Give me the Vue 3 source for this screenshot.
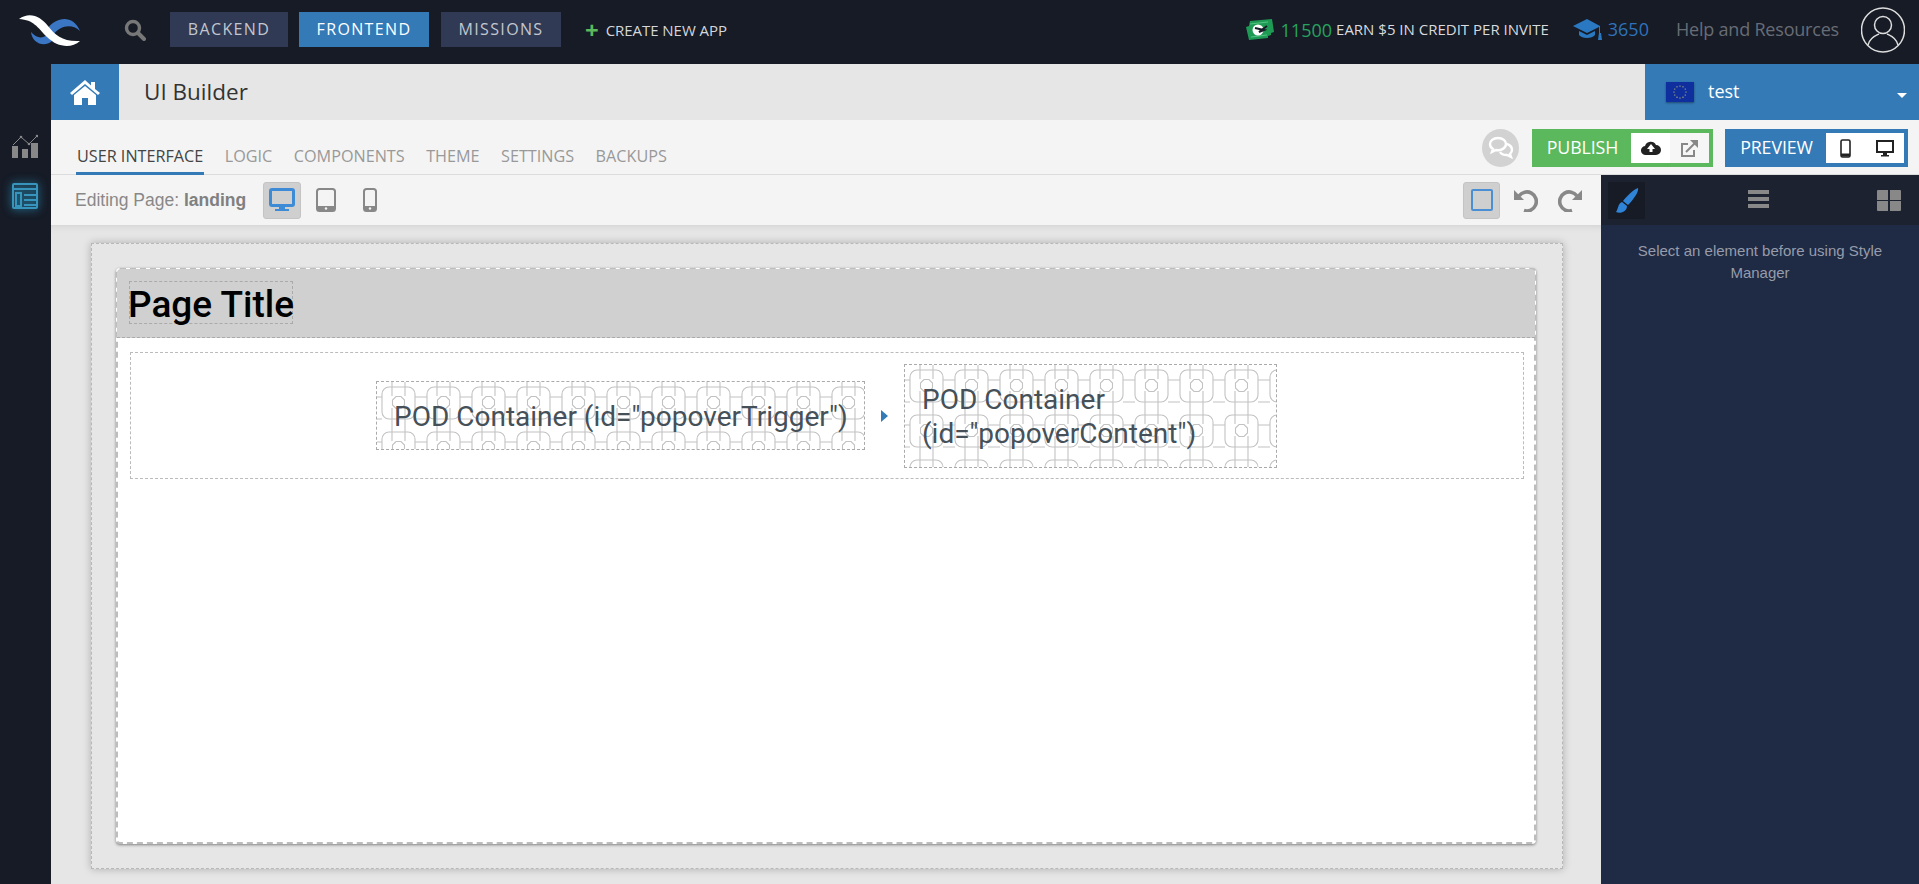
<script setup>
const tabs = ['USER INTERFACE', 'LOGIC', 'COMPONENTS', 'THEME', 'SETTINGS', 'BACKUPS']
const stars = Array.from({ length: 12 }, (_, i) => ({
  x: 14 + 6 * Math.cos((i * Math.PI) / 6),
  y: 10 + 6 * Math.sin((i * Math.PI) / 6),
}))
</script>

<template>
  <div class="app">
    <header class="topbar">
      <svg class="logo" width="80" height="50" viewBox="0 0 80 50">
        <path fill="#3a76c4" d="M70 26C63 9 46 12 38 23l5 7c7-9 18-12 27-4zM21 27c1 11 13 16 21 9l-5-6c-5 4-11 3-16-3z" />
        <path fill="#fff" d="M9 14C20 6 31 12 38 21s15 16 32 15c-9 8-23 6-33-4S24 15 9 14z" />
      </svg>
      <svg class="search" width="22" height="22" viewBox="0 0 22 22">
        <circle cx="9" cy="9" r="6.500" fill="none" stroke="#777" stroke-width="3.400" />
        <path d="M14 14l6 6" stroke="#777" stroke-width="4" stroke-linecap="round" />
      </svg>
      <a class="nav-btn backend">BACKEND</a>
      <a class="nav-btn frontend">FRONTEND</a>
      <a class="nav-btn missions">MISSIONS</a>
      <span class="create"><b class="plus">+</b>CREATE NEW APP</span>
      <div class="top-right">
        <svg width="30" height="24" viewBox="0 0 30 24" class="money">
          <path fill="#1f9a55" d="M5 3l22-2 2 13-3 1 0 2-3 1 0 2L4 22 1 9l3-1z" />
          <path fill="none" stroke="#5fd08e" stroke-width=".8" d="M5 6l18-2M6 19l16-2" />
          <circle cx="13" cy="12" r="5.500" fill="#fff" />
          <path d="M10 10l9 2-5 2 8-6" fill="none" stroke="#161b26" stroke-width="2" />
        </svg>
        <span class="credits">11500</span>
        <span class="earn">EARN $5 IN CREDIT PER INVITE</span>
        <svg class="cap" width="30" height="24" viewBox="0 0 30 24">
          <path fill="#2a78c2" d="M14 1L0 8l14 7 12-6v7h1V8zM6 13v4c3 4 13 4 16 0v-4l-8 4z" />
          <path fill="#2a78c2" d="M26 15l2 0 1 7h-4z" />
        </svg>
        <span class="points">3650</span>
        <span class="help">Help and Resources</span>
        <svg width="44" height="46" viewBox="0 0 44 46" class="avatar">
          <ellipse cx="22" cy="23" rx="21.500" ry="22" fill="none" stroke="#ddd" stroke-width="1.500" />
          <circle cx="22" cy="18" r="8.500" fill="none" stroke="#ddd" stroke-width="1.500" />
          <path d="M7 38c2-8 9-10 11-11M37 38c-2-8-9-10-11-11" fill="none" stroke="#ddd" stroke-width="1.500" />
        </svg>
      </div>
    </header>

    <div class="below">
      <aside class="rail">
        <svg width="26" height="26" viewBox="0 0 26 26" class="rail-chart">
          <path d="M1 13l8-8 8 7 8-8" fill="none" stroke="#888" stroke-width="1" />
          <g fill="#888">
            <circle cx="9" cy="5" r="1.300" /><circle cx="17" cy="12" r="1.300" /><circle cx="25" cy="4" r="1.300" />
            <rect x="0" y="14" width="6" height="12" /><rect x="10" y="17" width="6" height="9" /><rect x="19" y="11" width="7" height="15" />
          </g>
        </svg>
        <svg width="26" height="26" viewBox="0 0 26 26" class="rail-layout">
          <g fill="none" stroke="#3795bd" stroke-width="2">
            <rect x="1" y="1" width="24" height="24" rx="1" />
            <path d="M1 6h24M12 12h13M12 17h13M12 22h13" />
            <rect x="4" y="10" width="5" height="13" />
          </g>
        </svg>
      </aside>

      <div class="main">
        <div class="titlebar">
          <div class="home">
            <svg width="30" height="26" viewBox="0 0 30 26">
              <path fill="#fff" d="M15 1L0 14l2 2L15 5l13 11 2-2-5-4V3h-4v3.500zM15 7L4 16v10h8v-7h6v7h8V16z" />
            </svg>
          </div>
          <div class="title">UI Builder</div>
          <div class="project">
            <svg class="flag" width="28" height="20" viewBox="0 0 28 20">
              <rect width="28" height="20" fill="#0f2f9e" />
              <circle v-for="(s, i) in stars" :key="i" :cx="s.x" :cy="s.y" r=".6" fill="#e5d96a" />
            </svg>
            <span class="project-name">test</span>
            <i class="caret"></i>
          </div>
        </div>

        <div class="tabsbar">
          <nav class="tabs">
            <a v-for="(t, i) in tabs" :key="t" :class="['tab', { active: i === 0 }]">{{ t }}</a>
          </nav>
          <div class="actions">
            <div class="chat">
              <svg width="26" height="24" viewBox="0 0 26 24">
                <g fill="none" stroke="#fff" stroke-width="2.400">
                  <path d="M10 2C5 2 2 5 2 8c0 2 1 4 3 5l-1 3 4-2c5 1 10-2 10-6 0-3-3-6-8-6z" />
                  <path d="M19 8c3 1 5 3 5 6 0 2-1 3-2 4l1 3-4-2c-3 0-6-1-7-3" />
                </g>
              </svg>
            </div>
            <div class="publish">
              <span class="label">PUBLISH</span>
              <div class="inner">
                <span class="cell first">
                  <svg width="20" height="16" viewBox="0 0 20 16">
                    <path fill="#222" d="M5 15a4.500 4.500 0 0 1-1-9 6 6 0 0 1 11-1 5 5 0 0 1 0 10z" />
                    <path fill="#fff" d="M10 4l4 5h-2.500v3h-3V9H6z" />
                  </svg>
                </span>
                <span class="cell">
                  <svg width="17" height="17" viewBox="0 0 17 17">
                    <path fill="none" stroke="#888" stroke-width="2" d="M13 10v6H1V4h6" />
                    <path fill="none" stroke="#888" stroke-width="2" d="M5 12L15 2" />
                    <path fill="#888" d="M9 0h8v8z" />
                  </svg>
                </span>
              </div>
            </div>
            <div class="preview">
              <span class="label">PREVIEW</span>
              <div class="inner">
                <span class="cell">
                  <svg width="11" height="19" viewBox="0 0 11 19">
                    <rect x="1" y="1" width="9" height="17" rx="1.500" fill="none" stroke="#222" stroke-width="1.600" />
                    <path d="M1 14.500h9v3H1z" fill="#222" />
                  </svg>
                </span>
                <span class="cell">
                  <svg width="18" height="17" viewBox="0 0 18 17">
                    <rect x="1" y="1" width="16" height="11" fill="none" stroke="#222" stroke-width="2" />
                    <path d="M7 13h4v2h2v1.500H5V15h2z" fill="#222" />
                  </svg>
                </span>
              </div>
            </div>
          </div>
        </div>

        <div class="work">
          <div class="center">
            <div class="toolbar">
              <span class="editing">Editing Page: <b>landing</b></span>
              <button class="tool on">
                <svg width="26" height="24" viewBox="0 0 26 24">
                  <rect x="1.500" y="1.500" width="23" height="16" rx="1.500" fill="none" stroke="#3d8ad6" stroke-width="3" />
                  <path d="M10 18h6v3h4v2H6v-2h4z" fill="#3d8ad6" />
                </svg>
              </button>
              <svg class="dev-a" width="20" height="24" viewBox="0 0 20 24">
                <rect x="1" y="1" width="18" height="22" rx="2.500" fill="none" stroke="#888" stroke-width="2" />
                <path d="M1 18h18v3a2 2 0 0 1-2 2H3a2 2 0 0 1-2-2z" fill="#888" />
                <circle cx="10" cy="20.500" r="1.200" fill="#f4f4f4" />
              </svg>
              <svg class="dev-b" width="14" height="24" viewBox="0 0 14 24">
                <rect x="1" y="1" width="12" height="22" rx="2.500" fill="none" stroke="#888" stroke-width="2" />
                <path d="M1 18h12v3a2 2 0 0 1-2 2H3a2 2 0 0 1-2-2z" fill="#888" />
                <circle cx="7" cy="20.500" r="1.200" fill="#f4f4f4" />
              </svg>
              <div class="tool-right">
                <button class="tool slim">
                  <span class="square"></span>
                </button>
                <svg class="undo" width="24" height="23" viewBox="0 0 24 23">
                  <path d="M5 7a9.500 9.500 0 1 1 5 14.500" fill="none" stroke="#888" stroke-width="3.600" />
                  <path d="M0 1v10h10z" fill="#888" />
                </svg>
                <svg class="redo" width="24" height="23" viewBox="0 0 24 23">
                  <path d="M19 7a9.500 9.500 0 1 0-5 14.500" fill="none" stroke="#888" stroke-width="3.600" />
                  <path d="M24 1v10H14z" fill="#888" />
                </svg>
              </div>
            </div>

            <div class="canvas">
              <div class="frame">
                <div class="page">
                  <div class="page-head">
                    <h1>Page Title</h1>
                  </div>
                  <div class="row">
                    <div class="pod trigger">
                      <svg class="pattern" width="100%" height="100%">
                        <rect width="100%" height="100%" fill="url(#tile)" />
                      </svg>
                      <span>POD Container (id="popoverTrigger")</span>
                    </div>
                    <div class="link"><i class="arrow"></i></div>
                    <div class="pod content">
                      <svg class="pattern" width="100%" height="100%">
                        <rect width="100%" height="100%" fill="url(#tile)" />
                      </svg>
                      <span>POD Container (id="popoverContent")</span>
                    </div>
                  </div>
                </div>
              </div>
            </div>
          </div>

          <aside class="panel">
            <div class="panel-head">
              <span class="brush">
                <svg width="24" height="26" viewBox="0 0 24 26">
                  <path fill="#2f84d8" d="M23 1c1 4-5 12-10 17l-5-4C12 9 19 2 23 1zM7 15l5 4c0 6-7 8-11 6 2-2 2-9 6-10z" />
                </svg>
              </span>
              <svg class="bars" width="21" height="18" viewBox="0 0 21 18">
                <path fill="#888" d="M0 0h21v4H0zM0 7h21v4H0zM0 14h21v4H0z" />
              </svg>
              <svg class="grid-ic" width="24" height="21" viewBox="0 0 24 21">
                <path fill="#888" d="M0 1a1 1 0 0 1 1-1h10v10H0zM13 0h10a1 1 0 0 1 1 1v9H13zM0 11h11v10H1a1 1 0 0 1-1-1zM13 11h11v9a1 1 0 0 1-1 1H13z" />
              </svg>
            </div>
            <p class="panel-text">Select an element before using Style Manager</p>
          </aside>
        </div>
      </div>
    </div>

    <svg class="defs" width="0" height="0">
      <defs>
        <pattern id="tile" width="45" height="45" patternUnits="userSpaceOnUse">
          <g fill="none" stroke="#c2c2c2" stroke-width="1.100">
            <rect x="5" y="5" width="33" height="32" rx="7" />
            <path d="M15 0v14M28 0v14M15 26v19M28 26v19" />
            <path d="M0 15h5M38 15h7M0 37h5M38 37h7" />
            <path d="M19 14.500h5l3.500 3.500v5L24 26.500h-5L15.500 23v-5z" />
          </g>
        </pattern>
      </defs>
    </svg>
  </div>
</template>

<style>
html, body { margin: 0; height: 100%; overflow: hidden; background: #161b26; }
</style>

<style scoped>
.app { height: 884px; display: flex; flex-direction: column; font-family: "Open Sans", sans-serif; background: #161b26; overflow: hidden; position: relative; }
.defs { position: absolute; }
svg { display: block; flex: none; }

.topbar { height: 64px; flex: none; display: flex; align-items: center; background: #161b26; }
.logo { margin-left: 10px; margin-top: -5px; }
.search { margin-left: 34px; margin-top: -5px; }
.nav-btn { height: 35px; line-height: 35px; margin-top: -5px; text-align: center; font-size: 16px; letter-spacing: 1.350px; background: #303a54; color: #c2c6cf; box-sizing: border-box; }
.backend { width: 118px; margin-left: 24px; }
.frontend { width: 130px; margin-left: 11px; background: #337ab7; color: #fff; }
.missions { width: 120px; margin-left: 12px; }
.create { margin-left: 24px; margin-top: -5px; font-size: 15px; color: #d4d6da; display: flex; align-items: center; letter-spacing: -.05px; }
.plus { color: #5cb85c; font-size: 24px; font-weight: 700; line-height: 20px; margin-right: 7px; }
.top-right { margin-left: auto; display: flex; align-items: center; margin-top: -5px; padding-right: 14px; }
.credits { color: #27a35f; font-size: 18px; margin-left: 6px; margin-top: 1px; }
.earn { color: #d8dade; font-size: 15px; margin-left: 4px; margin-top: -1px; }
.cap { margin-left: 24px; }
.points { color: #2f72ba; font-size: 18px; margin-left: 5px; margin-top: -1px; }
.help { color: #686c75; font-size: 18px; margin-left: 27px; letter-spacing: -.2px; margin-top: -2px; }
.avatar { margin-left: 22px; }

.below { flex: 1; display: flex; min-height: 0; }
.rail { width: 51px; flex: none; display: flex; flex-direction: column; align-items: center; }
.rail-chart { margin-top: 68px; margin-left: -1px; }
.rail-layout { margin-top: 25px; margin-left: -1px; filter: drop-shadow(0 0 5px #2a90bb); }

.main { flex: 1; min-width: 0; display: flex; flex-direction: column; }
.titlebar { height: 56px; flex: none; display: flex; align-items: center; background: #e6e6e6; }
.home { width: 68px; height: 100%; background: #337ab7; display: flex; align-items: center; justify-content: center; }
.title { margin-left: 25px; margin-top: -2px; font-size: 22.500px; color: #333; }
.project { margin-left: auto; width: 274px; height: 100%; box-sizing: border-box; background: #337ab7; color: #fff; display: flex; align-items: center; padding-left: 21px; font-size: 18px; position: relative; }
.project-name { margin-top: -2px; }
.flag { margin-right: 14px; box-shadow: 0 1px 2px rgba(0,0,0,.4); }
.caret { position: absolute; right: 12px; top: 29px; border: 5px solid transparent; border-top: 5px solid #fff; border-bottom: 0; }

.tabsbar { height: 55px; flex: none; box-sizing: border-box; display: flex; background: #f4f4f4; border-bottom: 1px solid #dcdcdc; }
.tabs { display: flex; gap: 19.500px; align-items: flex-end; padding-left: 25px; margin-bottom: -1px; }
.tab { font-size: 16.200px; color: #999; padding: 0 1px 5px; border-bottom: 3px solid transparent; line-height: 22px; }
.tab.active { color: #444; border-bottom-color: #337ab7; }
.actions { margin-left: auto; display: flex; align-items: flex-start; padding: 9px 11px 0 0; }
.chat { width: 37px; height: 38px; border-radius: 50%; background: #d2d2d2; display: flex; align-items: center; justify-content: center; margin-right: 13px; }
.publish, .preview { height: 38px; display: flex; align-items: center; box-sizing: border-box; padding-right: 4px; color: #fff; }
.publish { width: 181px; background: #5cb85c; }
.preview { width: 183px; background: #337ab7; margin-left: 12px; }
.label { flex: 1; text-align: center; font-size: 17.800px; letter-spacing: -.1px; margin-top: -2px; padding-left: 2px; }
.inner { height: 30px; display: flex; background: #fff; width: 78px; }
.cell { flex: 1; display: flex; align-items: center; justify-content: center; }
.publish .cell:last-child { background: #f6f6f6; }

.work { flex: 1; min-height: 0; display: flex; }
.center { flex: 1; min-width: 0; display: flex; flex-direction: column; }
.toolbar { height: 50px; flex: none; background: #f4f4f4; display: flex; align-items: center; padding-left: 24px; }
.editing { font-family: "Liberation Sans", sans-serif; font-size: 17.500px; color: #888; }
.editing b { color: #808080; }
.tool { width: 38px; height: 37px; padding: 0; border: 1px solid #c4c4c4; box-sizing: border-box; border-radius: 3px; background: #cfcfcf; display: flex; align-items: center; justify-content: center; }
.tool.slim { width: 37px; }
.editing + .tool { margin-left: 17px; }
.dev-a { margin-left: 15px; }
.dev-b { margin-left: 27px; }
.tool-right { margin-left: auto; display: flex; align-items: center; padding-right: 19px; }
.square { width: 18px; height: 18px; border: 2px solid #4a8ed4; border-radius: 2px; }
.undo { margin-left: 14px; }
.redo { margin-left: 20px; }

.canvas { flex: 1; min-height: 0; box-sizing: border-box; background: #e6e6e6; padding: 18px 38px 15px 40px; box-shadow: inset 0 8px 8px -8px rgba(0,0,0,.12); display: flex; }
.frame { flex: 1; min-width: 0; box-sizing: border-box; border: 1px dashed #b8b8b8; padding: 24px 26px 24px 24px; background: #e6e6e6; box-shadow: 0 0 8px rgba(0,0,0,.25); display: flex; }
.page { flex: 1; min-width: 0; box-sizing: border-box; background: #fff; border: 2px dashed #bdbdbd; border-radius: 4px; box-shadow: 0 1px 3px rgba(0,0,0,.45); }
.page-head { height: 69px; box-sizing: border-box; background: #d0d0d0; border-bottom: 1px dashed #aaa; padding: 12px 12px 0; margin: -1px -1px 0; border-radius: 4px 4px 0 0; }
h1 { margin: 0; width: 164px; height: 43px; box-sizing: border-box; border: 1px dashed #aaa; font-family: Roboto, sans-serif; font-weight: 500; font-size: 37px; line-height: 45px; color: #000; text-indent: -2px; white-space: nowrap; }
.row { margin: 14px 10px 0 12px; height: 127px; box-sizing: border-box; border: 1px dashed #bbb; display: flex; align-items: center; justify-content: center; padding-right: 1px; }
.pod { position: relative; box-sizing: border-box; border: 1px dashed #aaa; padding: 18px 16px 16px 17px; font-family: Roboto, sans-serif; font-size: 28px; line-height: 34px; color: #455058; }
.pod span { position: relative; }
.pattern { position: absolute; inset: 0; }
.trigger { width: 489px; height: 69px; white-space: nowrap; }
.content { width: 373px; height: 104px; }
.link { width: 39px; display: flex; justify-content: center; }
.arrow { border-left: 7px solid #337ab7; border-top: 6px solid transparent; border-bottom: 6px solid transparent; }

.panel { width: 318px; flex: none; background: #1f2a44; }
.panel-head { height: 50px; background: #1c2230; display: flex; align-items: center; position: relative; }
.brush { width: 37px; height: 37px; margin-left: 7px; background: #171b26; display: flex; align-items: center; justify-content: center; }
.bars { margin-left: 103px; margin-top: -2px; }
.grid-ic { margin-left: auto; margin-right: 18px; }
.panel-text { margin: 15px 18px 0 18px; text-align: center; font-family: "Liberation Sans", sans-serif; font-size: 15px; line-height: 22px; color: #969cab; }
</style>
